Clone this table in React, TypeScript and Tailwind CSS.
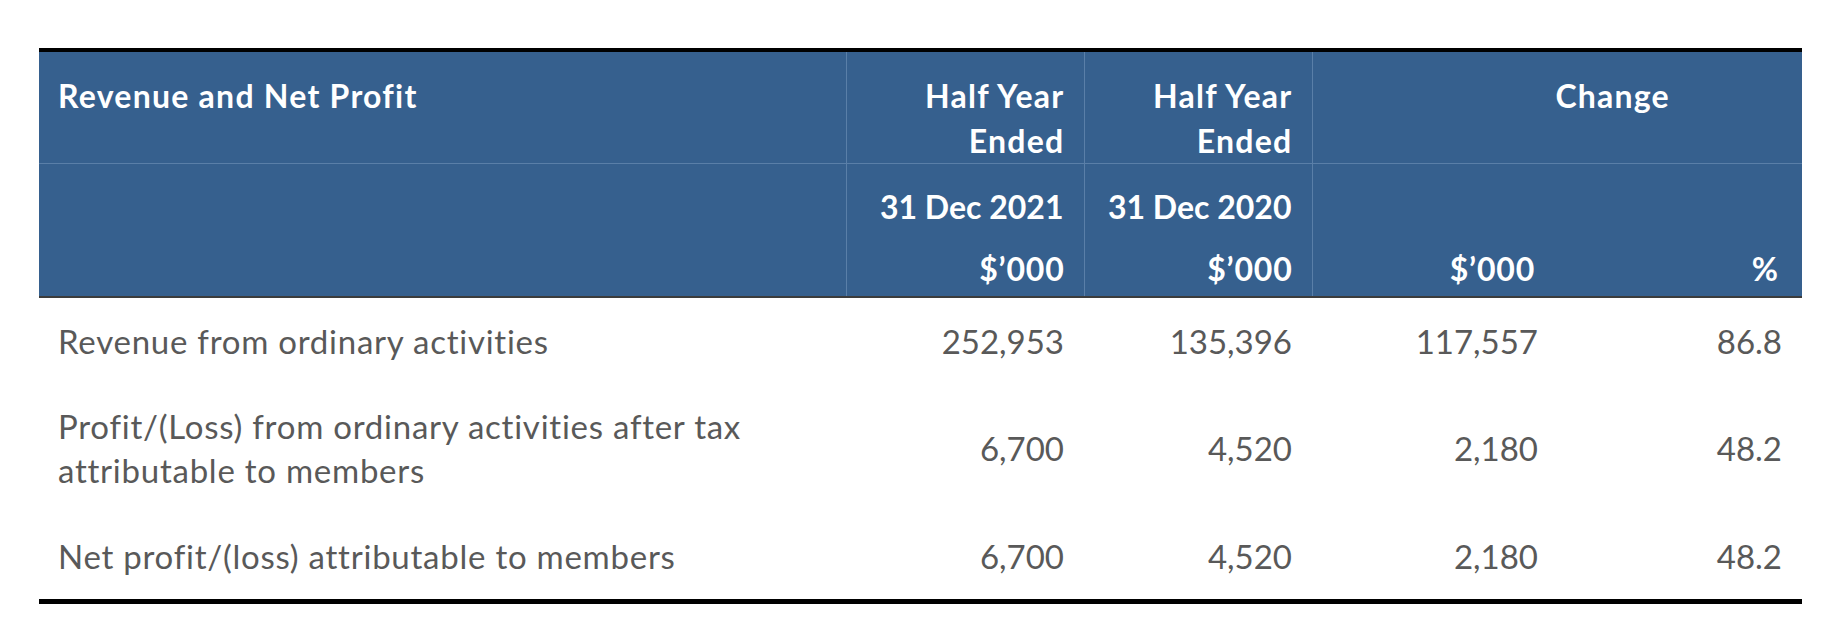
const rows = [
  { label: ['Revenue from ordinary activities'], cur: '252,953', prev: '135,396', diff: '117,557', pct: '86.8' },
  { label: ['Profit/(Loss) from ordinary activities after tax', 'attributable to members'], cur: '6,700', prev: '4,520', diff: '2,180', pct: '48.2' },
  { label: ['Net profit/(loss) attributable to members'], cur: '6,700', prev: '4,520', diff: '2,180', pct: '48.2' },
];

export default function App() {
  return (
    <div className="min-h-screen bg-white pt-[48px] pl-[39px] font-['Lato','Open_Sans',sans-serif]">
      <div className="w-[1763px] border-t-4 border-b-[5px] border-black">
        <table className="w-full table-fixed border-collapse">
          <colgroup>
            <col className="w-[807px]" />
            <col className="w-[238px]" />
            <col className="w-[228px]" />
            <col className="w-[246px]" />
            <col className="w-[244px]" />
          </colgroup>
          <thead className="bg-[#36608e] text-white font-bold text-[32px] leading-[45px]">
            <tr className="border-b border-[#5a7fa8]">
              <th className="border-r border-[#5a7fa8] pl-[19px] pt-[21px] text-left align-top font-bold tracking-[1.25px]">Revenue and Net Profit</th>
              <th className="border-r border-[#5a7fa8] pr-[19px] pt-[21px] text-right align-top font-bold tracking-[1.25px]">Half Year<br />Ended</th>
              <th className="border-r border-[#5a7fa8] pr-[19px] pt-[21px] text-right align-top font-bold tracking-[1.25px]">Half Year<br />Ended</th>
              <th colSpan={2} className="pl-[243px] pt-[21px] text-left align-top font-bold tracking-[1.2px]">Change</th>
            </tr>
            <tr>
              <th className="border-r border-[#5a7fa8]" />
              <th className="border-r border-[#5a7fa8] pr-5 pt-5 text-right align-top font-bold whitespace-nowrap">31 Dec 2021</th>
              <th className="border-r border-[#5a7fa8] pr-5 pt-5 text-right align-top font-bold whitespace-nowrap">31 Dec 2020</th>
              <th colSpan={2} />
            </tr>
            <tr className="border-b-2 border-[#3c3c3c]">
              <th className="border-r border-[#5a7fa8]" />
              <th className="border-r border-[#5a7fa8] pr-[19px] pt-[17px] pb-[5px] text-right align-top font-bold tracking-[0.8px]">$’000</th>
              <th className="border-r border-[#5a7fa8] pr-[19px] pt-[17px] pb-[5px] text-right align-top font-bold tracking-[0.8px]">$’000</th>
              <th className="pr-[23px] pt-[17px] pb-[5px] text-right align-top font-bold tracking-[0.8px]">$’000</th>
              <th className="pr-6 pt-[17px] pb-[5px] text-right align-top font-bold">%</th>
            </tr>
          </thead>
          <tbody className="text-[#595959] text-[33px] leading-[44px]">
            {rows.map((r, i) => (
              <tr key={i}>
                <td className={`pl-[19px] pt-[21px] align-middle whitespace-nowrap tracking-[0.75px] ${i === 0 ? 'pb-5' : 'pb-[21px]'}`}>
                  {r.label.map((l, j) => <div key={j}>{l}</div>)}
                </td>
                <td className="pr-5 text-right align-middle">{r.cur}</td>
                <td className="pr-5 text-right align-middle">{r.prev}</td>
                <td className="pr-5 text-right align-middle">{r.diff}</td>
                <td className="pr-5 text-right align-middle">{r.pct}</td>
              </tr>
            ))}
          </tbody>
        </table>
      </div>
    </div>
  );
}
